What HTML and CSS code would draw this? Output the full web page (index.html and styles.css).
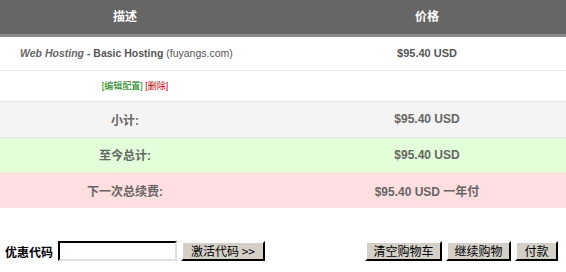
FILE: index.html
```html
<!DOCTYPE html>
<html lang="zh-CN">

<head>
    <meta charset="UTF-8">
    <title>购物车</title>
    <link rel="stylesheet" href="styles.css">
</head>

<body>
    <table class="cart-table">
        <thead>
            <tr>
                <th class="col-desc">描述</th>
                <th class="col-price">价格</th>
            </tr>
        </thead>
        <tbody>
            <tr class="item-row">
                <td class="item-desc"><em>Web Hosting</em> <strong>- Basic Hosting</strong> (fuyangs.com)</td>
                <td class="item-price">$95.40 USD</td>
            </tr>
            <tr class="links-row">
                <td class="item-links">
                    <a href="#" class="link-edit">[编辑配置]</a>
                    <a href="#" class="link-remove">[删除]</a>
                </td>
                <td></td>
            </tr>
            <tr class="total-row subtotal">
                <td class="total-label">小计:</td>
                <td class="total-value">$95.40 USD</td>
            </tr>
            <tr class="total-row today">
                <td class="total-label">至今总计:</td>
                <td class="total-value">$95.40 USD</td>
            </tr>
            <tr class="total-row recurring">
                <td class="total-label">下一次总续费:</td>
                <td class="total-value">$95.40 USD 一年付</td>
            </tr>
        </tbody>
    </table>

    <div class="cart-actions">
        <form class="promo-form">
            <label for="promocode">优惠代码</label>
            <input type="text" id="promocode" class="promo-input">
            <button type="button" class="win-btn btn-promo">激活代码 &gt;&gt;</button>
        </form>
        <div class="checkout-btns">
            <button type="button" class="win-btn btn-empty">清空购物车</button>
            <button type="button" class="win-btn btn-continue">继续购物</button>
            <button type="button" class="win-btn btn-checkout">付款</button>
        </div>
    </div>
</body>

</html>
```

FILE: styles.css
```css
* {
    margin: 0;
    padding: 0;
    box-sizing: border-box;
}

body {
    font-family: "Liberation Sans", "Noto Sans CJK SC", sans-serif;
    font-size: 11px;
    color: #555;
    background-color: #fff;
    width: 566px;
}

.cart-table {
    width: 100%;
    border-collapse: collapse;
    table-layout: fixed;
}

.cart-table th {
    background-color: #666;
    color: #fff;
    font-size: 12px;
    font-weight: bold;
    height: 35px;
    padding-bottom: 3px;
    border-bottom: 3px solid #8a8a8a;
    text-align: center;
}

.col-desc {
    width: 250px;
}

.col-price {
    padding-left: 38px;
}

.item-row td {
    height: 35px;
    border-bottom: 1px solid #e6e6e6;
}

.item-desc {
    padding-left: 20px;
    font-size: 10.5px;
    color: #555;
}

.item-desc em {
    font-weight: bold;
    font-style: italic;
    color: #666;
}

.item-price {
    text-align: center;
    padding-left: 38px;
    font-weight: bold;
}

.links-row td {
    height: 31px;
    border-bottom: 1px solid #e6e6e6;
}

.item-links {
    text-align: center;
    padding-left: 20px;
    font-size: 9px;
}

.item-links a {
    text-decoration: none;
}

.link-edit {
    color: #008000;
}

.link-remove {
    color: #cc0000;
}

.total-row td {
    height: 36px;
    font-size: 12px;
    font-weight: bold;
    color: #666;
}

.total-label {
    text-align: center;
}

.total-value {
    text-align: center;
    padding-left: 38px;
}

.subtotal td {
    background-color: #f4f4f4;
    border-bottom: 1px solid #e4ece0;
}

.today td {
    background-color: #e2ffd9;
    height: 35px;
}

.recurring td {
    background-color: #ffdfdf;
    height: 36px;
}

.cart-actions {
    display: flex;
    justify-content: space-between;
    align-items: center;
    margin-top: 33px;
    padding: 0 8px 0 5px;
}

.promo-form {
    display: flex;
    align-items: center;
}

.promo-form label {
    font-size: 12px;
    font-weight: bold;
    color: #000;
    margin-right: 5px;
}

.promo-input {
    width: 119px;
    height: 20px;
    border: 2px inset #d4d0c8;
    border-top-color: #404040;
    border-left-color: #404040;
    border-right-color: #e0e0e0;
    border-bottom-color: #e0e0e0;
    margin-right: 4px;
}

.win-btn {
    font-family: "Noto Sans CJK SC", sans-serif;
    font-size: 12px;
    color: #000;
    height: 20px;
    background-color: #d4d0c8;
    border: 2px outset #d4d0c8;
    border-top-color: #fff;
    border-left-color: #fff;
    border-right-color: #404040;
    border-bottom-color: #404040;
    padding: 0;
    line-height: 14px;
}

.btn-promo {
    width: 84px;
}

.checkout-btns {
    display: flex;
    gap: 4px;
}

.btn-empty {
    width: 77px;
}

.btn-continue {
    width: 65px;
}

.btn-checkout {
    width: 43px;
}
```
